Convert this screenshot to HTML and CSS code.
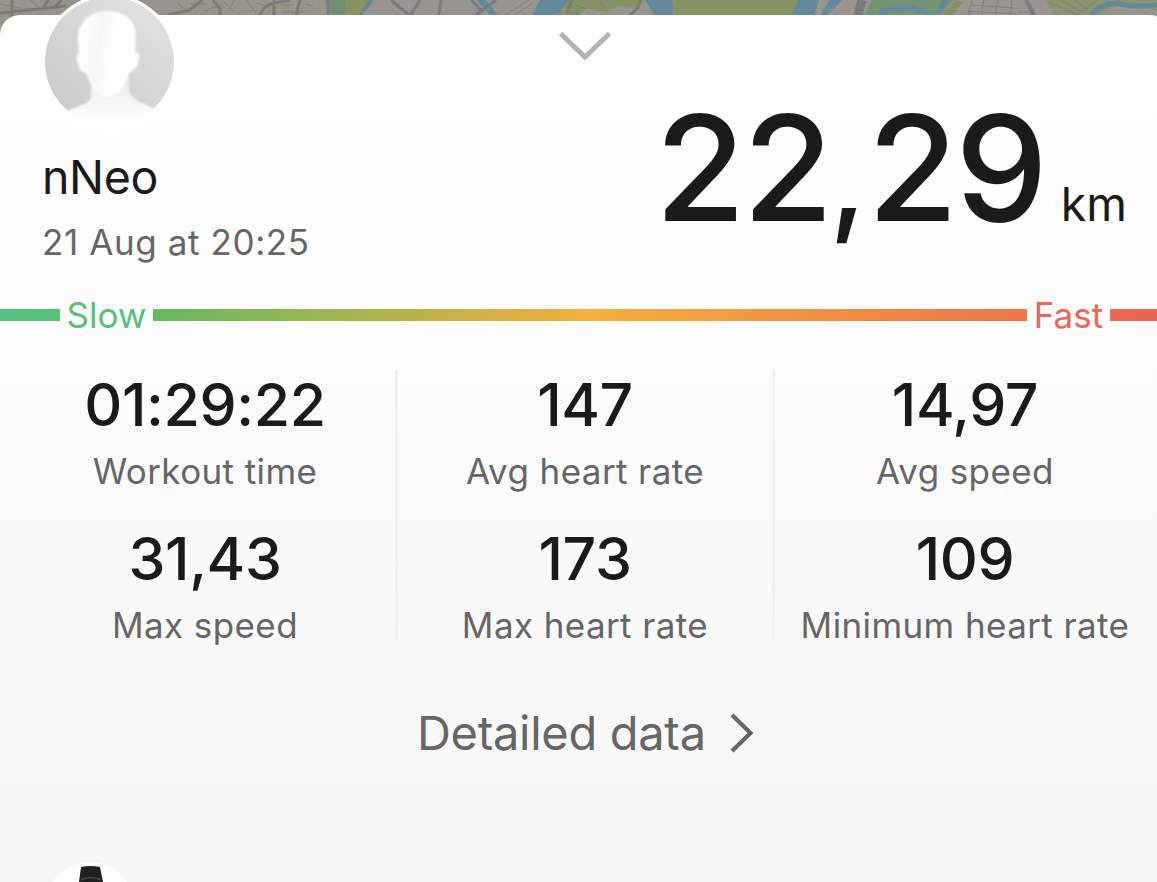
FILE: index.html
```html
<!DOCTYPE html>
<html lang="en">
<head>
    <meta charset="UTF-8">
    <meta name="viewport" content="width=device-width, initial-scale=1.0">
    <title>Workout</title>
    <link rel="stylesheet" href="styles.css">
</head>
<body>

    <!-- Map behind the sheet -->
    <svg class="map" width="1157" height="40" viewBox="0 0 1157 40">
        <rect width="1157" height="40" fill="#97948a"/>
        <rect x="320" width="837" height="40" fill="#98948f"/>
        <path d="M325 0h35l-8 15h-20z" fill="#709076"/>
        <path d="M346 0h26l-12 15h-14z" fill="#87945f"/>
        <path d="M372 0l-12 15M480 0l14 15" fill="none" stroke="#63899b" stroke-width="4"/>
        <path d="M476 0h10l12 15h-8z" fill="#63899b"/>
        <path d="M540 0h28l-10 15h-26z" fill="#63899b"/>
        <path d="M568 0h76l-5 8-22-2-10 7-20-5-8 7h-20z" fill="#849365"/>
        <path d="M645 0h28v15h-18z" fill="#63899b"/>
        <path d="M672 0h130l-10 15H674z" fill="#869464"/>
        <path d="M798 0h21l-5 15h-22zM830 0h12l-14 15h-8z" fill="#63899b"/>
        <path d="M872 0h82l-16 15h-73z" fill="#749372"/>
        <path d="M878 15Q900 0 930 15M946 0l-9 15" fill="none" stroke="#63899b" stroke-width="5"/>
        <path d="M940 15l16-15 8 2-12 13z" fill="#869464"/>
        <path d="M1045 0h112v10l-40-4-14 9h-48z" fill="#8d9472"/>
        <path d="M1091 15q12-14 28-11t38 1" fill="none" stroke="#63899b" stroke-width="5"/>
        <g fill="none" stroke="#7b7b7c" stroke-width="3">
            <path d="M0 13l28-3 38-4M12 0v24M48 0l-6 10M62 0l-10 9M168 15l22-5 12-10M213 0l7 9v6M260 15q3-9 14-12l16-3M274 0v15M300 0l-4 15M328 0v15M391 0l18 15M420 0l-9 15M441 0l-2 15M496 0l-20 15M471 0l10 10M572 0l-5 13M640 0l-2 8-8 7"/>
            <path d="M862 0l-4 15" stroke-width="9"/>
            <path d="M1026 0l8 15" stroke-width="4"/>
        </g>
        <g fill="none" stroke="#807f7e" stroke-width="1">
            <path d="M0 4l20 4M18 15l8-7M30 0l10 8M178 3l8 8M190 4h18M204 12l12-6M224 2l10 9M234 0l-5 11M246 0l10 13M256 3l10 3M280 5h14M282 12h22M305 4l8 2M505 15l24-15M515 15l18-12M570 10l8 5M575 5l12 4M600 2l6 8M972 0l-4 15M984 0l-3 15M998 0l-3 15M1012 0l-2 15M970 5l44 3M968 11l48 3M1018 12h12M1050 3l28 12M1060 0l24 13M1075 0l14 11M1098 0l-22 15M1120 0l-25 15"/>
        </g>
    </svg>

    <div class="sheet">
        <svg class="collapse" width="54" height="30" viewBox="0 0 54 30">
            <path d="M2.500 2.500L27 26L51.500 2.500" fill="none" stroke="#b3b3b3" stroke-width="5"/>
        </svg>

        <svg class="avatar" width="136" height="136" viewBox="0 0 136 136">
            <defs>
                <linearGradient id="avatarBack" x1="0" y1="1" x2="1" y2="0">
                    <stop offset="0" stop-color="#c9c9c9"/>
                    <stop offset="1" stop-color="#e4e4e4"/>
                </linearGradient>
                <linearGradient id="body" x1="0" y1="0" x2="0" y2="1">
                    <stop offset="0" stop-color="#e4e4e4"/>
                    <stop offset="0.5" stop-color="#f6f6f6"/>
                    <stop offset="0.8" stop-color="#ffffff"/>
                </linearGradient>
                <linearGradient id="face" x1="0" y1="0.4" x2="1" y2="0.6">
                    <stop offset="0" stop-color="#ffffff"/>
                    <stop offset="0.35" stop-color="#f7f7f7"/>
                    <stop offset="0.6" stop-color="#ffffff"/>
                </linearGradient>
                <clipPath id="circle"><circle cx="67.500" cy="67.500" r="64.500"/></clipPath>
                <filter id="soft"><feGaussianBlur stdDeviation="0.8"/></filter>
            </defs>
            <circle cx="67.500" cy="67.500" r="67.500" fill="#ffffff"/>
            <g clip-path="url(#circle)">
                <rect width="136" height="118" fill="url(#avatarBack)"/>
                <g filter="url(#soft)">
                    <path d="M49 84V102Q49 107 42 110L20 119V140H122V119L96 107Q87 102 87 95V75Z" fill="url(#body)"/>
                    <path d="M65 17C46 17 36 30 36 45L37 59Q34 60 35 67Q37 78 45 80Q51 102 65 103Q79 102 87 79Q95 77 97 64Q98 58 93 58L94 42C93 27 84 17 65 17Z" fill="url(#face)"/>
                </g>
            </g>
        </svg>

        <div class="header">
            <div class="user">
                <div class="name">nNeo</div>
                <div class="date">21 Aug at 20:25</div>
            </div>
            <div class="distance"><span class="distance-value">22<span class="comma">,</span>29</span><span class="distance-unit">km</span></div>
        </div>

        <!-- Speed scale -->
        <div class="scale">
            <div class="bar bar-start"></div>
            <div class="slow">Slow</div>
            <div class="bar bar-middle"></div>
            <div class="fast">Fast</div>
            <div class="bar bar-end"></div>
        </div>

        <div class="stats">
            <div class="column">
                <div class="value">01:29:22</div>
                <div class="label">Workout time</div>
                <div class="value">31,43</div>
                <div class="label">Max speed</div>
            </div>
            <div class="column">
                <div class="value">147</div>
                <div class="label">Avg heart rate</div>
                <div class="value">173</div>
                <div class="label">Max heart rate</div>
            </div>
            <div class="column">
                <div class="value">14,97</div>
                <div class="label">Avg speed</div>
                <div class="value">109</div>
                <div class="label">Minimum heart rate</div>
            </div>
        </div>

        <div class="details">
            <span>Detailed data</span>
            <svg width="24" height="40" viewBox="0 0 24 40">
                <path d="M2 2L20.500 20L2 38" fill="none" stroke="#666666" stroke-width="4.200"/>
            </svg>
        </div>

        <!-- Watch -->
        <svg class="device" width="90" height="20" viewBox="0 0 90 20">
            <circle cx="45" cy="45" r="45" fill="#ffffff"/>
            <path d="M36 5Q45 3 55 5L58 20H34Z" fill="#202020"/>
            <path d="M36 18Q45 13 56 18" fill="none" stroke="#484848" stroke-width="1.500"/>
        </svg>
    </div>

</body>
</html>
```
FILE: styles.css
```css
body {
    margin: 0;
    height: 882px;
    overflow: hidden;
    position: relative;
    font-family: Inter, "Liberation Sans", sans-serif;
    color: #1a1a1a;
    background-color: #f6f6f6;
}

.map {
    position: absolute;
    top: 0;
    left: 0;
}

.sheet {
    position: relative;
    box-sizing: border-box;
    height: 867px;
    margin-top: 15px;
    padding-top: 72px;
    border-top-left-radius: 20px;
    border-top-right-radius: 8px 2px;
    background: linear-gradient(#ffffff, #f6f6f6);
}

.collapse {
    position: absolute;
    top: 16px;
    left: 558px;
}

.avatar {
    position: absolute;
    top: -21px;
    left: 42px;
}

.header {
    display: flex;
    justify-content: space-between;
    height: 208px;
    padding: 0 30px 0 42px;
}

.user {
    padding-top: 62px;
}

.name {
    font-size: 46.5px;
    line-height: 56px;
    letter-spacing: -0.4px;
}

.date {
    margin-top: 15px;
    font-size: 35px;
    line-height: 44px;
    letter-spacing: 0.6px;
    color: #666666;
}

.distance {
    padding-top: 1px;
    line-height: 160px;
    white-space: nowrap;
}

.distance-value {
    font-size: 147px;
    font-weight: 500;
    letter-spacing: -3px;
}

.comma {
    margin: 0 4px 0 -1px;
    font-size: 123px;
}

.distance-unit {
    margin-left: 16px;
    font-size: 46.5px;
}

.scale {
    display: flex;
    align-items: center;
    height: 40px;
    font-size: 35px;
    line-height: 40px;
    text-align: center;
}

.bar {
    height: 12px;
}

.bar-start {
    width: 60px;
    background: linear-gradient(90deg, #54c183, #59c075);
}

.bar-middle {
    width: 874px;
    background: linear-gradient(90deg, #64ba60, #f3ae3d 50%, #ec7549);
}

.bar-end {
    width: 47px;
    background: linear-gradient(90deg, #ea6950, #ea6556);
}

.slow {
    width: 93px;
    color: #5bbf80;
}

.fast {
    width: 83px;
    color: #e7695c;
}

.stats {
    display: grid;
    grid-template-columns: 383px 377px 380px;
    height: 272px;
    margin: 34px 0 0 15px;
    text-align: center;
    white-space: nowrap;
}

.column {
    box-sizing: border-box;
    height: 272px;
    padding-top: 6px;
    border-right: 3px solid #f1f1f1;
}

.column:last-child {
    border-right: none;
}

.value {
    font-size: 59px;
    font-weight: 500;
    line-height: 60px;
    letter-spacing: -0.4px;
}

.label {
    margin: 14px 0 36px;
    font-size: 35px;
    line-height: 44px;
    letter-spacing: 0.4px;
    color: #666666;
}

.details {
    display: flex;
    align-items: center;
    height: 60px;
    margin-top: 62px;
    padding-left: 417px;
    gap: 24px;
    font-size: 47px;
    line-height: 60px;
    letter-spacing: -0.3px;
    color: #666666;
}

.device {
    position: absolute;
    left: 45px;
    bottom: 0;
}
```
